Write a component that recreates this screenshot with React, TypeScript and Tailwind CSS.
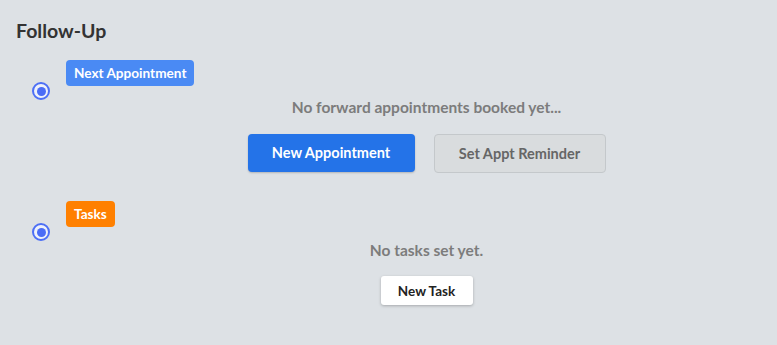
function Radio() {
  return (
    <span className="flex h-[18px] w-[18px] items-center justify-center rounded-full border-2 border-[#4d6ff5] bg-[#eef1fb]">
      <span className="h-[9px] w-[9px] rounded-full bg-[#4a6cf6]" />
    </span>
  );
}

function Section({
  label,
  badgeClass,
  message,
  messageClass,
  children,
}: {
  label: string;
  badgeClass: string;
  message: string;
  messageClass: string;
  children: React.ReactNode;
}) {
  return (
    <div className="flex">
      <div className="w-[66px] shrink-0 pl-[32px] pt-[22px]">
        <Radio />
      </div>
      <div className="flex-1">
        <span
          className={`inline-flex h-[26px] items-center rounded-[4px] px-[8px] text-[13.6px] font-bold text-white ${badgeClass}`}
        >
          {label}
        </span>
        <div className="flex flex-col items-center pl-[10px]">
          <p className={`text-[15.5px] leading-[22px] font-bold text-[#7c7c7c] ${messageClass}`}>{message}</p>
          {children}
        </div>
      </div>
    </div>
  );
}

export default function App() {
  return (
    <div
      className="h-[345px] w-[777px] overflow-hidden bg-[#dde1e5]"
      style={{ fontFamily: "Lato, 'Liberation Sans', sans-serif" }}
    >
      <h2 className="pl-[16px] pt-[18px] text-[19.5px] font-bold leading-[26px] text-[#333333]">
        Follow-Up
      </h2>
      <div className="mt-[16px]">
        <Section
          label="Next Appointment"
          badgeClass="bg-[#4a8af4]"
          message="No forward appointments booked yet..."
          messageClass="mt-[10px]"
        >
          <div className="mt-[16px] flex gap-[19px]">
            <button className="h-[38px] w-[167px] rounded-[4px] bg-[#2473e8] text-[14.5px] font-bold text-white shadow-[0_1px_2px_rgba(0,0,0,0.2)]">
              New Appointment
            </button>
            <button className="h-[39px] w-[172px] rounded-[4px] border border-[#c4c8cb] bg-[#d9dcde] text-[14.5px] font-bold text-[#666666]">
              Set Appt Reminder
            </button>
          </div>
        </Section>
      </div>
      <div className="mt-[28px]">
        <Section
          label="Tasks"
          badgeClass="bg-[#ff8000]"
          message="No tasks set yet."
          messageClass="mt-[12px]"
        >
          <button className="mt-[15px] h-[29px] w-[92px] rounded-[3px] bg-white text-[13.5px] font-bold text-[#222222] shadow-[0_1px_3px_rgba(0,0,0,0.25)]">
            New Task
          </button>
        </Section>
      </div>
    </div>
  );
}
